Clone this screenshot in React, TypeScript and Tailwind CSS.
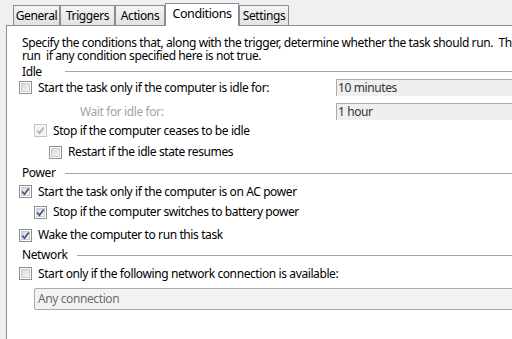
import React from 'react'

const tabs = [
  { label: 'General', w: 'w-[47px]' },
  { label: 'Triggers', w: 'w-[55px]' },
  { label: 'Actions', w: 'w-[50px]' },
  { label: 'Conditions', w: 'w-[74px]', active: true },
  { label: 'Settings', w: 'w-[50px]' },
]

function Box({ checked, disabled }: { checked?: boolean; disabled?: boolean }) {
  return (
    <span
      className={`relative inline-flex h-[13px] w-[13px] shrink-0 items-center justify-center border ${
        disabled ? 'border-[#c4c4c4] bg-[#f7f7f7]' : 'border-[#8e8f8f] bg-white'
      }`}
    >
      <span
        className={`h-[9px] w-[9px] ${
          disabled ? 'bg-[#f2f2f2]' : 'border border-[#c9ccd1] bg-linear-to-br from-[#d6d8dc] to-[#f6f6f6]'
        }`}
      />
      {checked && (
        <svg className="absolute inset-0" width="11" height="11" viewBox="0 0 11 11">
          <path
            d="M2.2 5.6 L4.4 8.2 L8.8 2.4"
            fill="none"
            stroke={disabled ? '#aaaaaa' : '#3d5182'}
            strokeWidth="1.6"
          />
        </svg>
      )}
    </span>
  )
}

function Heading({ label, w, h }: { label: string; w: string; h: string }) {
  return (
    <div className={`flex items-center pl-[3px] ${h}`}>
      <span className={`shrink-0 ${w}`}>{label}</span>
      <span className="h-px flex-1 bg-[#a5a5a5]" />
    </div>
  )
}

function Combo({ text }: { text: string }) {
  return (
    <div className="flex h-[17px] w-[300px] shrink-0 items-center border-l border-t border-[#ababab] bg-[#efefef] pl-px text-[#333]">
      {text}
    </div>
  )
}

export default function App() {
  return (
    <div className="h-[339px] w-[512px] overflow-hidden bg-[#f0f0f0] text-[12px] tracking-[-0.4px] text-black font-['Noto_Sans','DejaVu_Sans',sans-serif]">
      {/* tab strip */}
      <div className="relative z-10 flex h-[25px] items-end pl-[13px]">
        {tabs.map(t =>
          t.active ? (
            <div
              key={t.label}
              className={`-mb-px flex h-[23px] items-start justify-center border border-b-0 border-[#898c95] bg-white pt-[1px] text-[12.5px] ${t.w}`}
            >
              {t.label}
            </div>
          ) : (
            <div
              key={t.label}
              className={`flex h-[20px] items-center justify-center border border-b-0 border-[#898c95] bg-linear-to-b from-[#f4f4f4] to-[#e2e2e2] ${t.w}`}
            >
              {t.label}
            </div>
          )
        )}
      </div>

      {/* panel */}
      <div className="ml-[6px] h-[314px] w-[720px] border-l border-t border-[#898c95] bg-white">
        <div className="whitespace-nowrap pl-[15px] pt-[10px] leading-[13px]">
          <div>Specify the conditions that, along with the trigger, determine whether the task should run.&nbsp; The task will not</div>
          <div>run&nbsp; if any condition specified here is not true.</div>
        </div>

        <div className="whitespace-nowrap pl-[12px]">
          <div className="mt-[2px]">
            <Heading label="Idle" w="w-[43px]" h="h-[15px]" />
          </div>

          <div className="flex h-[17px] items-center">
            <div className="flex w-[317px] shrink-0 items-center">
              <Box />
              <span className="ml-[6px]">Start the task only if the computer is idle for:</span>
            </div>
            <Combo text="10 minutes" />
          </div>

          <div className="mt-[7px] flex h-[17px] items-center">
            <div className="w-[317px] shrink-0 pl-[61px] text-[#a3a3a3]">Wait for idle for:</div>
            <Combo text="1 hour" />
          </div>

          <div className="flex h-[21px] items-center pl-[15px]">
            <Box checked disabled />
            <span className="ml-[6px]">Stop if the computer ceases to be idle</span>
          </div>

          <div className="flex h-[22px] items-center pl-[30px]">
            <Box />
            <span className="ml-[6px]">Restart if the idle state resumes</span>
          </div>

          <Heading label="Power" w="w-[43px]" h="h-[20px]" />

          <div className="flex h-[17px] items-center">
            <Box checked />
            <span className="ml-[6px]">Start the task only if the computer is on AC power</span>
          </div>

          <div className="flex h-[24px] items-center pl-[15px]">
            <Box checked />
            <span className="ml-[6px]">Stop if the computer switches to battery power</span>
          </div>

          <div className="flex h-[22px] items-center">
            <Box checked />
            <span className="ml-[6px]">Wake the computer to run this task</span>
          </div>

          <Heading label="Network" w="w-[55px]" h="h-[18px]" />

          <div className="flex h-[19px] items-center">
            <Box />
            <span className="ml-[6px]">Start only if the following network connection is available:</span>
          </div>

          <div className="ml-[15px] mt-[5px] flex h-[22px] w-[560px] items-center rounded-[2px] border border-[#acacac] bg-[#f2f2f2] pl-[3px] text-[#6d6d6d]">
            Any connection
          </div>
        </div>
      </div>
    </div>
  )
}
